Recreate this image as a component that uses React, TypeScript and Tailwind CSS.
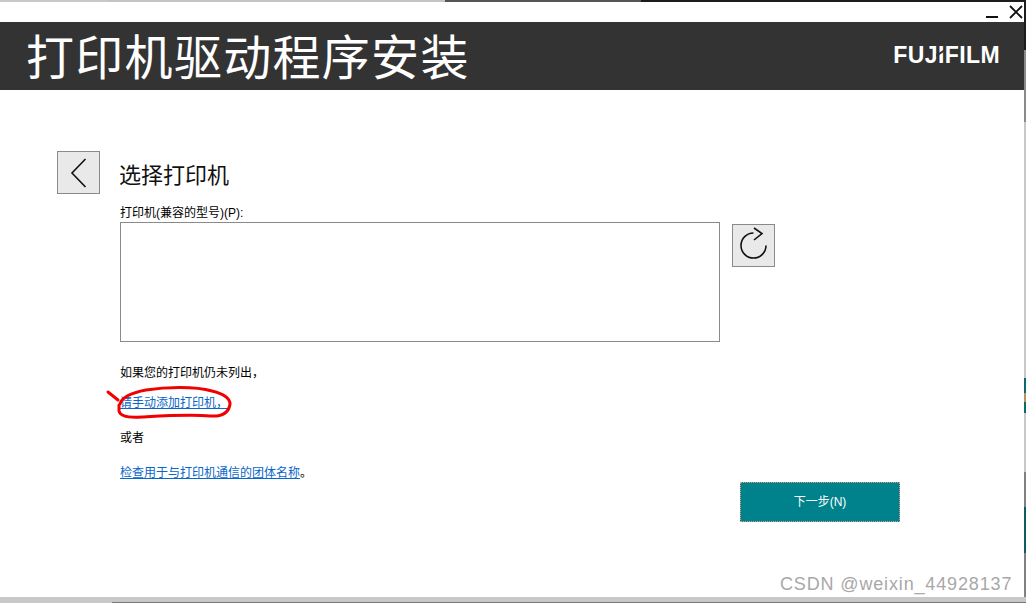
import React from "react";

const cjk = "font-['Liberation_Sans','Noto_Sans_CJK_SC',sans-serif]";

function GreyButton({ children, className = "" }: { children: React.ReactNode; className?: string }) {
  return (
    <button className={`flex h-[43px] w-[43px] shrink-0 items-center justify-center border border-[#8a8a8a] bg-[#e9e9e9] ${className}`}>
      {children}
    </button>
  );
}

export default function App() {
  return (
    <div className={`relative flex h-[603px] w-[1026px] flex-col overflow-hidden bg-white text-black ${cjk}`}>
      {/* window behind, top edge */}
      <div className="flex h-[2px] shrink-0">
        <div className="w-[108px] bg-[#c8c8c8]" />
        <div className="w-[337px] bg-[#c4c4c4]" />
        <div className="w-[196px] bg-[#555]" />
        <div className="flex-1 bg-[#1c1c1c]" />
      </div>

      <div className="flex min-h-0 flex-1">
        <div className="flex min-w-0 flex-1 flex-col">
          {/* title bar */}
          <div className="flex h-[20px] shrink-0 items-start justify-end">
            <div className="mr-[11px] mt-[14px] h-[2px] w-[12px] bg-[#111]" />
            <svg className="mr-[1px] mt-[3px]" width="14" height="14" viewBox="0 0 14 14">
              <path d="M1 1 L13 13 M13 1 L1 13" stroke="#111" strokeWidth="1.8" fill="none" />
            </svg>
          </div>

          {/* header */}
          <div className="flex h-[68px] shrink-0 items-center justify-between bg-[#333333] pl-[26px] pr-[24px]">
            <h1 className="pt-[6px] text-[48px] font-normal leading-none tracking-[1.3px] text-white">打印机驱动程序安装</h1>
            <span className="relative mb-[2px] font-['Liberation_Sans',sans-serif] text-[23px] font-bold leading-none tracking-[0.4px] text-white">
              FUJIFILM
              <svg className="absolute left-[43px] top-[3px]" width="9" height="17" viewBox="0 0 9 17">
                <path d="M0 9 L9 3" stroke="#333333" strokeWidth="2" fill="none" />
              </svg>
            </span>
          </div>

          {/* body */}
          <div className="flex flex-1 pl-[57px] pt-[61px]">
            <GreyButton>
              <svg width="18" height="30" viewBox="0 0 18 30">
                <path d="M15.5 1 L2 15 L15.5 29" stroke="#111" strokeWidth="1.6" fill="none" />
              </svg>
            </GreyButton>

            <div className="ml-[19px] flex flex-col">
              <h2 className="mt-[10px] h-[32px] text-[22px] leading-[30px] text-[#111]">选择打印机</h2>
              <label className="mt-[12px] h-[17px] pl-px text-[12px] leading-[17px]">打印机(兼容的型号)(P):</label>

              <div className="flex items-start pl-px">
                <div className="h-[120px] w-[600px] border border-[#8a8a8a] bg-white" />
                <GreyButton className="ml-[12px] mt-[2px]">
                  <svg width="41" height="41" viewBox="0 0 41 41">
                    <path d="M20.5 8 A12.5 12.5 0 1 0 33 20.5" stroke="#111" strokeWidth="1.6" fill="none" />
                    <path d="M21 3 L29 8.5 L21 15" stroke="#111" strokeWidth="1.6" fill="none" />
                  </svg>
                </GreyButton>
              </div>

              <p className="mt-[23px] h-[17px] pl-px text-[12px] leading-[17px]">如果您的打印机仍未列出，</p>
              <a className="mt-[13px] h-[17px] pl-px text-[12px] leading-[17px] text-[#0a66c8] underline">请手动添加打印机，</a>
              <p className="mt-[18px] h-[17px] pl-px text-[12px] leading-[17px]">或者</p>
              <p className="mt-[18px] h-[17px] pl-px text-[12px] leading-[17px]">
                <a className="text-[#0a66c8] underline">检查用于与打印机通信的团体名称</a>。
              </p>

              <div className="flex justify-end">
                <button className="-mr-[125px] h-[40px] w-[160px] border border-dotted border-[#e0a090] bg-[#00828c] text-[12px] text-white">
                  下一步(N)
                </button>
              </div>
            </div>
          </div>
        </div>

        {/* window behind, right edge */}
        <div className="flex w-[2px] shrink-0 flex-col">
          <div className="h-[48px] bg-[#1c1c1c]" />
          <div className="h-[72px] bg-[#8a8a8a]" />
          <div className="h-[256px] bg-[#c8c8c8]" />
          <div className="h-[15px] bg-[#0b6a6c]" />
          <div className="h-[9px] bg-[#b8925a]" />
          <div className="h-[11px] bg-[#0b6a6c]" />
          <div className="h-[59px] bg-[#c8c8c8]" />
          <div className="h-[35px] bg-[#808080]" />
          <div className="h-[46px] bg-[#0b5f62]" />
          <div className="flex-1 bg-[#808080]" />
        </div>
      </div>

      {/* window behind, bottom edge */}
      <div className="flex h-[6px] shrink-0 flex-col bg-[#c8c8c8]">
        <div className="flex-1" />
        <div className="ml-[112px] h-[1px] bg-[#777]" />
      </div>

      {/* red pen annotation */}
      <svg className="absolute left-0 top-0" width="1026" height="603" viewBox="0 0 1026 603" fill="none">
        <path
          d="M108 392 L118 400 M120 404 C122 397 130 393 146 390 C165 387 195 386 212 391 C224 394 230 398 230 404 C229 412 224 417 210 416 C190 414 160 416 142 417 C128 418 120 416 119 411 L119 405"
          stroke="#f00000"
          strokeWidth="3"
          strokeLinecap="round"
          strokeLinejoin="round"
        />
      </svg>

      {/* watermark */}
      <span className="absolute left-[780px] top-[573px] font-['Liberation_Sans',sans-serif] text-[18px] leading-[22px] tracking-[0.85px] text-[#a8a8a8]">
        CSDN @weixin_44928137
      </span>
    </div>
  );
}
